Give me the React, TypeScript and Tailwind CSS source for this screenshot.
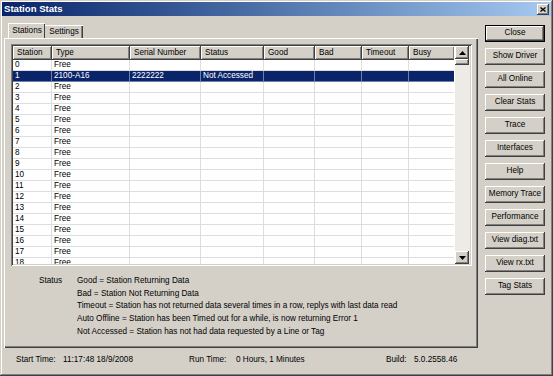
import React from "react";

const cols = [
  { name: "Station", w: 39 },
  { name: "Type", w: 78 },
  { name: "Serial Number", w: 71 },
  { name: "Status", w: 63 },
  { name: "Good", w: 51 },
  { name: "Bad", w: 47 },
  { name: "Timeout", w: 47 },
  { name: "Busy", w: 46 },
];

const rows: string[][] = Array.from({ length: 19 }, (_, i) =>
  i === 1
    ? ["1", "2100-A16", "2222222", "Not Accessed", "", "", "", ""]
    : [String(i), "Free", "", "", "", "", "", ""]
);

const buttons = [
  "Close",
  "Show Driver",
  "All Online",
  "Clear Stats",
  "Trace",
  "Interfaces",
  "Help",
  "Memory Trace",
  "Performance",
  "View diag.txt",
  "View rx.txt",
  "Tag Stats",
];

const raised =
  "shadow-[inset_-1px_-1px_#404040,inset_1px_1px_#ffffff,inset_-2px_-2px_#808080]";

function Btn({ label, def }: { label: string; def?: boolean }) {
  return (
    <div
      className={
        "h-[17px] w-[60px] flex items-center justify-center bg-[#d4d0c8] text-[8.2px] text-black " +
        (def
          ? "border border-black shadow-[inset_-1px_-1px_#404040,inset_1px_1px_#ffffff,inset_-2px_-2px_#808080]"
          : raised)
      }
    >
      {label}
    </div>
  );
}

function Arrow({ up }: { up?: boolean }) {
  return (
    <div className={"h-[13px] w-[14px] flex items-center justify-center bg-[#d4d0c8] " + raised}>
      <svg width="7" height="4" viewBox="0 0 7 4">
        {up ? <polygon points="3.5,0 7,4 0,4" fill="#000" /> : <polygon points="0,0 7,0 3.5,4" fill="#000" />}
      </svg>
    </div>
  );
}

export default function App() {
  return (
    <div className="w-[553px] h-[376px] bg-[#d4d0c8] p-[2px] flex flex-col overflow-hidden font-['Liberation_Sans',Arial,sans-serif] text-black shadow-[inset_-1px_-1px_#404040,inset_1px_1px_#d4d0c8,inset_-2px_-2px_#808080,inset_2px_2px_#ffffff]">
      {/* Title bar */}
      <div className="h-[14px] flex items-center justify-between bg-linear-to-r from-[#0a246a] to-[#a6caf0] pl-[2px] pr-[2px]">
        <span className="text-white font-bold text-[9.6px] leading-none">Station Stats</span>
        <div className={"w-[12px] h-[11px] bg-[#d4d0c8] flex items-center justify-center " + raised}>
          <svg width="6" height="5" viewBox="0 0 6 5">
            <path d="M0.5 0.5 L5.5 4.5 M5.5 0.5 L0.5 4.5" stroke="#000" strokeWidth="1.3" />
          </svg>
        </div>
      </div>

      <div className="flex flex-1">
        {/* Left: tab control */}
        <div className="ml-[2px] w-[474px] flex flex-col">
          <div className="mt-[7px] h-[15px] flex items-end pl-[4px]">
            <div className="h-[15px] w-[37px] bg-[#d4d0c8] border-t border-l border-white shadow-[inset_-1px_0_#404040] rounded-t-[1px] text-[8.2px] flex items-center justify-center relative z-10">
              Stations
            </div>
            <div className="h-[13px] w-[38px] bg-[#d4d0c8] border-t border-white shadow-[inset_-1px_0_#404040,inset_-2px_0_#808080] text-[8.2px] flex items-center justify-center">
              Settings
            </div>
          </div>
          <div className="h-[310px] border-t border-l border-white shadow-[inset_-1px_-1px_#404040,inset_-2px_-2px_#808080] flex flex-col">
            {/* List view */}
            <div className="ml-[6px] mt-[5px] w-[461px] h-[222px] p-[2px] bg-white shadow-[inset_1px_1px_#808080,inset_-1px_-1px_#ffffff,inset_2px_2px_#404040,inset_-2px_-2px_#d4d0c8] flex">
              <div className="w-[442px] flex flex-col overflow-hidden">
                <div className="flex h-[14px] shrink-0">
                  {cols.map((c) => (
                    <div
                      key={c.name}
                      style={{ width: c.w }}
                      className={"shrink-0 h-[14px] bg-[#d4d0c8] pl-[4px] text-[8.2px] flex items-center " + raised}
                    >
                      {c.name}
                    </div>
                  ))}
                </div>
                {rows.map((r, i) => (
                  <div
                    key={i}
                    className={"flex h-[11px] shrink-0 " + (i === 1 ? "bg-[#0a246a] text-white" : "")}
                  >
                    {r.map((cell, j) => (
                      <div
                        key={j}
                        style={{ width: cols[j].w }}
                        className={
                          "shrink-0 h-[11px] pl-[2px] text-[8.2px] leading-[10px] whitespace-nowrap overflow-hidden border-r border-b " +
                          (i === 1 ? "border-[#6f7fa8]" : "border-[#dedede]")
                        }
                      >
                        {cell}
                      </div>
                    ))}
                  </div>
                ))}
              </div>
              {/* Scrollbar */}
              <div className="w-[15px] ml-[1px] flex flex-col bg-[#ecebe6]">
                <Arrow up />
                <div className={"h-[6px] w-[14px] bg-[#d4d0c8] " + raised} />
                <div className="flex-1" />
                <Arrow />
              </div>
            </div>

            {/* Legend */}
            <div className="mt-[9px] flex text-[8.2px] leading-[12.7px]">
              <div className="ml-[34px] w-[38px]">Status</div>
              <div className="flex flex-col">
                <div>Good = Station Returning Data</div>
                <div>Bad = Station Not Returning Data</div>
                <div>Timeout = Station has not returned data several times in a row, replys with last data read</div>
                <div>Auto Offline = Station has been Timed out for a while, is now returning Error 1</div>
                <div>Not Accessed = Station has not had data requested by a Line or Tag</div>
              </div>
            </div>
          </div>
          {/* Status bar */}
          <div className="h-[24px] flex items-center text-[8.2px] whitespace-nowrap">
            <div className="ml-[12px] w-[47px]">Start Time:</div>
            <div className="w-[126px]">11:17:48 18/9/2008</div>
            <div className="w-[47px]">Run Time:</div>
            <div className="w-[150px]">0 Hours, 1 Minutes</div>
            <div className="w-[28px]">Build:</div>
            <div>5.0.2558.46</div>
          </div>
        </div>

        {/* Right: buttons */}
        <div className="ml-[7px] mt-[9px] flex flex-col gap-[6px]">
          {buttons.map((b, i) => (
            <Btn key={b} label={b} def={i === 0} />
          ))}
        </div>
      </div>
    </div>
  );
}
